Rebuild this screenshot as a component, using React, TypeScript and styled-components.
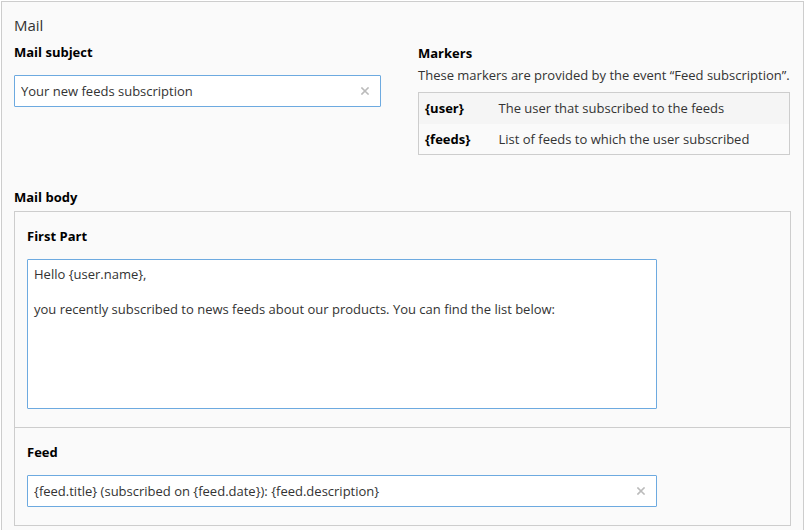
import React from 'react'
import styled, { createGlobalStyle } from 'styled-components'

const GlobalStyle = createGlobalStyle`
  html, body {
    margin: 0;
    padding: 0;
    background: #fff;
  }
  body {
    font-family: "Open Sans", "Noto Sans", Arial, sans-serif;
    font-size: 13px;
    color: #333;
  }
  * { box-sizing: border-box; }
`

const Frame = styled.div`
  margin: 1px 0 0 1px;
  width: 803px;
  height: 560px;
  background: #fafafa;
  border: 1px solid #cdcdcd;
  padding: 13px 12px 0 12px;
`

const Title = styled.div`
  font-size: 15px;
  color: #333;
  line-height: 20px;
`

const Columns = styled.div`
  display: grid;
  grid-template-columns: 367px 1fr;
  column-gap: 37px;
  margin-right: 1px;
`

const Label = styled.div<{ $gap?: number; $top?: number }>`
  font-weight: 700;
  color: #000;
  line-height: 18px;
  margin-top: ${(p) => p.$top ?? 0}px;
  margin-bottom: ${(p) => p.$gap ?? 12}px;
`

const InputWrap = styled.div<{ $width?: number }>`
  position: relative;
  width: ${(p) => (p.$width ? `${p.$width}px` : '100%')};
`

const TextInput = styled.input`
  display: block;
  width: 100%;
  height: 32px;
  padding: 0 28px 0 6px;
  border: 1px solid #6daae0;
  border-radius: 1px;
  background: #fff;
  font: inherit;
  color: #333;
  outline: none;
`

const Clear = styled.span`
  position: absolute;
  right: 12px;
  top: 50%;
  transform: translateY(-50%);
  display: flex;
`

const Description = styled.p`
  margin: 4px 0 8px;
  line-height: 18px;
`

const Table = styled.table`
  width: 100%;
  border-collapse: collapse;
  border: 1px solid #cdcdcd;
`

const Row = styled.tr<{ $striped?: boolean }>`
  background: ${(p) => (p.$striped ? '#f5f5f5' : '#fafafa')};
  & + & td { border-top: 1px solid #cdcdcd; }
`

const Marker = styled.td`
  padding: 6px;
  height: 31px;
  width: 74px;
  font-weight: 700;
  color: #000;
  white-space: nowrap;
`

const Cell = styled.td`
  padding: 6px;
`

const BodySection = styled.div`
  margin-top: 33px;
`

const Panel = styled.div`
  width: 777px;
  border: 1px solid #cdcdcd;
  background: #fafafa;
`

const Part = styled.div`
  padding: 15px 12px 18px;
  & + & { border-top: 1px solid #cdcdcd; }
`

const TextArea = styled.textarea`
  display: block;
  width: 630px;
  height: 150px;
  padding: 6px 6px;
  border: 1px solid #6daae0;
  border-radius: 1px;
  background: #fff;
  font: inherit;
  line-height: 17.5px;
  color: #333;
  resize: none;
  outline: none;
`

const ClearIcon = () => (
  <svg width="8" height="8" viewBox="0 0 8 8">
    <path d="M1 1 L7 7 M7 1 L1 7" stroke="#bbb" strokeWidth="1.6" strokeLinecap="square" />
  </svg>
)

const markers = [
  { key: '{user}', text: 'The user that subscribed to the feeds' },
  { key: '{feeds}', text: 'List of feeds to which the user subscribed' },
]

export default function App() {
  return (
    <>
      <GlobalStyle />
      <Frame>
        <Title>Mail</Title>
        <Columns>
          <div>
            <Label $top={8} $gap={14}>Mail subject</Label>
            <InputWrap>
              <TextInput defaultValue="Your new feeds subscription" />
              <Clear><ClearIcon /></Clear>
            </InputWrap>
          </div>
          <div>
            <Label $top={9} $gap={0}>Markers</Label>
            <Description>These markers are provided by the event “Feed subscription”.</Description>
            <Table>
              <tbody>
                {markers.map((m, i) => (
                  <Row key={m.key} $striped={i % 2 === 0}>
                    <Marker>{m.key}</Marker>
                    <Cell>{m.text}</Cell>
                  </Row>
                ))}
              </tbody>
            </Table>
          </div>
        </Columns>
        <BodySection>
          <Label $gap={5}>Mail body</Label>
          <Panel>
            <Part>
              <Label $gap={14}>First Part</Label>
              <TextArea
                defaultValue={'Hello {user.name},\n\nyou recently subscribed to news feeds about our products. You can find the list below:'}
              />
            </Part>
            <Part>
              <Label $gap={14}>Feed</Label>
              <InputWrap $width={630}>
                <TextInput defaultValue="{feed.title} (subscribed on {feed.date}): {feed.description}" />
                <Clear><ClearIcon /></Clear>
              </InputWrap>
            </Part>
          </Panel>
        </BodySection>
      </Frame>
    </>
  )
}
